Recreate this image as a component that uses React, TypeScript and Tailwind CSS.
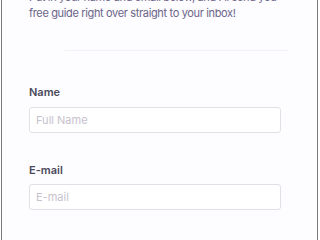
import React from "react";

export default function App() {
  return (
    <div className="w-[320px] h-[240px] overflow-hidden bg-white" style={{ fontFamily: "Inter, 'Liberation Sans', sans-serif" }}>
      <div className="ml-px w-[317px] h-[240px] border-x border-[#7a7a7a] bg-[#fdfcfe] overflow-hidden">
        <div className="pl-[27px] pr-[36px] -mt-[11px]">
          <p className="w-[262px] text-[11px] leading-[16px] tracking-[-0.35px] text-[#6b6589]">
            Put in your name and email below, and I'll send you<br />free guide right over straight to your inbox!
          </p>
          <div className="mt-[29px] ml-[36px] mr-[-8px] h-px bg-[#f3f1f5]" />
          <label className="block mt-[33px] text-[11px] leading-[16px] font-semibold text-[#4a4a5a]">Name</label>
          <input
            placeholder="Full Name"
            className="block mt-[7px] w-full h-[26px] rounded-[3px] border border-[#e2dfe7] bg-white px-[6px] text-[11px] placeholder:text-[#c6c2ce] outline-none"
          />
          <label className="block mt-[29px] text-[11px] leading-[16px] font-semibold text-[#4a4a5a]">E-mail</label>
          <input
            placeholder="E-mail"
            className="block mt-[6px] w-full h-[26px] rounded-[3px] border border-[#e2dfe7] bg-white px-[6px] text-[11px] placeholder:text-[#c6c2ce] outline-none"
          />
        </div>
      </div>
    </div>
  );
}
